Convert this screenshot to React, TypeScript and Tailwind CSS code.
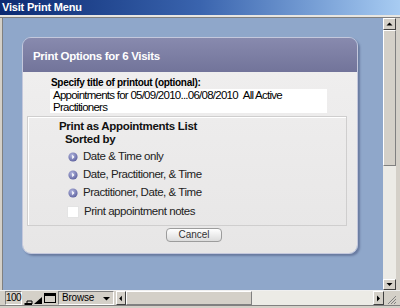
import React from 'react';

const sortOptions = ['Date & Time only', 'Date, Practitioner, & Time', 'Practitioner, Date, & Time'];

const RadioIcon = () => (
  <svg width="10" height="10" viewBox="0 0 10 10" className="shrink-0">
    <defs>
      <radialGradient id="rg" cx="40%" cy="35%" r="70%">
        <stop offset="0%" stopColor="#b4b8e0" />
        <stop offset="100%" stopColor="#5a5e9c" />
      </radialGradient>
    </defs>
    <circle cx="5" cy="5" r="4.6" fill="url(#rg)" />
    <path d="M4.2 2.8 L6.4 5 L4.2 7.2 Z" fill="#ffffff" />
  </svg>
);

const ArrowBtn = ({ dir }: { dir: 'up' | 'down' | 'left' | 'right' }) => {
  const paths = {
    up: 'M1.5 5.5 L4.5 2.5 L7.5 5.5 Z',
    down: 'M1.5 3 L4.5 6 L7.5 3 Z',
    left: 'M5.5 1.5 L2.5 4.5 L5.5 7.5 Z',
    right: 'M3 1.5 L6 4.5 L3 7.5 Z',
  };
  return (
    <div className="w-full h-full bg-[#d4d0c8] border border-t-white border-l-white border-r-[#404040] border-b-[#404040] flex items-center justify-center">
      <svg width="9" height="9" viewBox="0 0 9 9">
        <path d={paths[dir]} fill="#000" />
      </svg>
    </div>
  );
};

export default function App() {
  return (
    <div className="w-[400px] h-[308px] bg-[#d4d0c8] flex flex-col overflow-hidden font-['Liberation_Sans',Arial,sans-serif]">
      {/* title bar */}
      <div className="h-[15px] bg-gradient-to-r from-[#0c2a72] via-[#3a64ae] to-[#a8ccf2] flex items-center pl-[2px]">
        <span className="text-white font-bold text-[11px] leading-none tracking-[-0.2px]">Visit Print Menu</span>
      </div>
      <div className="h-[3px] bg-[#e8e6e1] border-b border-[#808080]" />

      <div className="flex h-[272px]">
        <div className="w-[3px] bg-[#d4d0c8] border-r border-[#808080]" />
        <div className="flex-1 bg-[#8fa7ca] pl-[19px] pt-[19px]">
          {/* dialog panel */}
          <div className="w-[336px] h-[217px] rounded-[9px] flex flex-col overflow-hidden border border-[#c4c8dc] shadow-[2px_2px_2px_rgba(60,70,110,0.45)]">
            <div className="h-[34px] shrink-0 bg-gradient-to-b from-[#888aae] to-[#72749a] flex items-center pl-[10px] pt-[3px]">
              <span className="text-white font-bold text-[11.5px] tracking-[-0.3px]">Print Options for 6 Visits</span>
            </div>
            <div className="flex-1 bg-gradient-to-b from-[#efeeee] to-[#e7e6e6] flex flex-col pl-[4px]">
              <div className="pl-[24px] pt-[5px] text-[10px] font-bold text-black leading-[12px] tracking-[-0.3px]">
                Specify title of printout (optional):
              </div>
              <div className="ml-[23px] mt-[0px] w-[277px] h-[24px] bg-white px-[3px] pt-[1px] text-[11.5px] leading-[11.5px] text-black tracking-[-0.75px]">
                Appointments for 05/09/2010...06/08/2010&nbsp;&nbsp;All Active Practitioners
              </div>
              <div className="mt-[3px] w-[320px] h-[110px] border border-[#cfcece] shadow-[inset_1px_1px_0_#ffffff] flex flex-col">
                <div className="pl-[31px] pt-[3px] text-[11.5px] font-bold leading-[13px] tracking-[-0.3px] text-[#111]">
                  Print as Appointments List
                </div>
                <div className="pl-[37px] text-[11.5px] font-bold leading-[13px] tracking-[-0.3px] text-[#111]">
                  Sorted by
                </div>
                <div className="pl-[40px] pt-[4px] flex flex-col gap-[5px]">
                  {sortOptions.map((o) => (
                    <div key={o} className="flex items-center gap-[5px] h-[13px]">
                      <RadioIcon />
                      <span className="text-[11.5px] tracking-[-0.45px] text-[#222]">{o}</span>
                    </div>
                  ))}
                  <div className="flex items-center gap-[5px] h-[13px] -ml-[1px] mt-[1px]">
                    <div className="w-[12px] h-[12px] bg-white border border-[#e4e4e4]" />
                    <span className="text-[11.5px] tracking-[-0.45px] text-[#222]">Print appointment notes</span>
                  </div>
                </div>
              </div>
              <div className="ml-[139px] mt-[2px] w-[56px] h-[14px] rounded-[4px] border border-[#9c9c9c] bg-gradient-to-b from-white to-[#dcdcdc] flex items-center justify-center text-[10px] text-[#333] leading-none">
                Cancel
              </div>
            </div>
          </div>
        </div>
        {/* vertical scrollbar */}
        <div className="w-[13px] bg-[#ecebe6] flex flex-col">
          <div className="h-[12px]"><ArrowBtn dir="up" /></div>
          <div className="h-[136px] bg-[#d4d0c8] border border-t-white border-l-white border-r-[#808080] border-b-[#808080]" />
          <div className="flex-1" />
          <div className="h-[11px]"><ArrowBtn dir="down" /></div>
        </div>
        <div className="w-[4px] bg-[#d4d0c8]" />
      </div>

      {/* status bar */}
      <div className="h-[15px] flex items-stretch pl-[5px] pr-[3px] bg-[#d4d0c8] border-t border-[#f0f0f0]">
        <div className="w-[17px] border border-t-[#808080] border-l-[#808080] border-r-white border-b-white flex items-center justify-center text-[10px] leading-none tracking-[-0.5px]">100</div>
        <div className="w-[10px] flex items-end justify-center ml-[1px]">
          <svg width="9" height="10" viewBox="0 0 9 10"><path d="M0 9 L3 9 L3 6 L8 6 L8 9" fill="none" stroke="#000" /><path d="M1 9 L8 9" stroke="#000" strokeWidth="2" /></svg>
        </div>
        <div className="w-[10px] flex items-end justify-center">
          <svg width="9" height="10" viewBox="0 0 9 10"><path d="M0 9 L8 2 L8 9 Z" fill="#000" /></svg>
        </div>
        <div className="w-[14px] flex items-center justify-center">
          <svg width="12" height="10" viewBox="0 0 12 10"><rect x="0.5" y="0.5" width="11" height="9" fill="#d4d0c8" stroke="#000" /><rect x="1" y="1" width="10" height="2" fill="#000" /></svg>
        </div>
        <div className="w-[56px] ml-[1px] border border-t-[#808080] border-l-[#808080] border-r-white border-b-white flex items-center justify-between pl-[3px] pr-[3px] text-[10px] leading-none">
          <span className="tracking-[-0.2px]">Browse</span>
          <svg width="7" height="5" viewBox="0 0 7 5"><path d="M0 1 L7 1 L3.5 4.5 Z" fill="#000" /></svg>
        </div>
        <div className="w-[10px] ml-[2px]"><ArrowBtn dir="left" /></div>
        <div className="w-[126px] bg-[#d4d0c8] border border-t-white border-l-white border-r-[#808080] border-b-[#808080]" />
        <div className="flex-1 bg-[#ecebe6]" />
        <div className="w-[11px]"><ArrowBtn dir="right" /></div>
        <div className="w-[13px] bg-[#d4d0c8] flex items-end justify-end">
          <svg width="11" height="11" viewBox="0 0 11 11"><path d="M10 2 L2 10 M10 5 L5 10 M10 8 L8 10" stroke="#808080" strokeWidth="1" /></svg>
        </div>
      </div>
      <div className="flex-1 bg-[#d4d0c8] border-t border-[#808080]" />
    </div>
  );
}
